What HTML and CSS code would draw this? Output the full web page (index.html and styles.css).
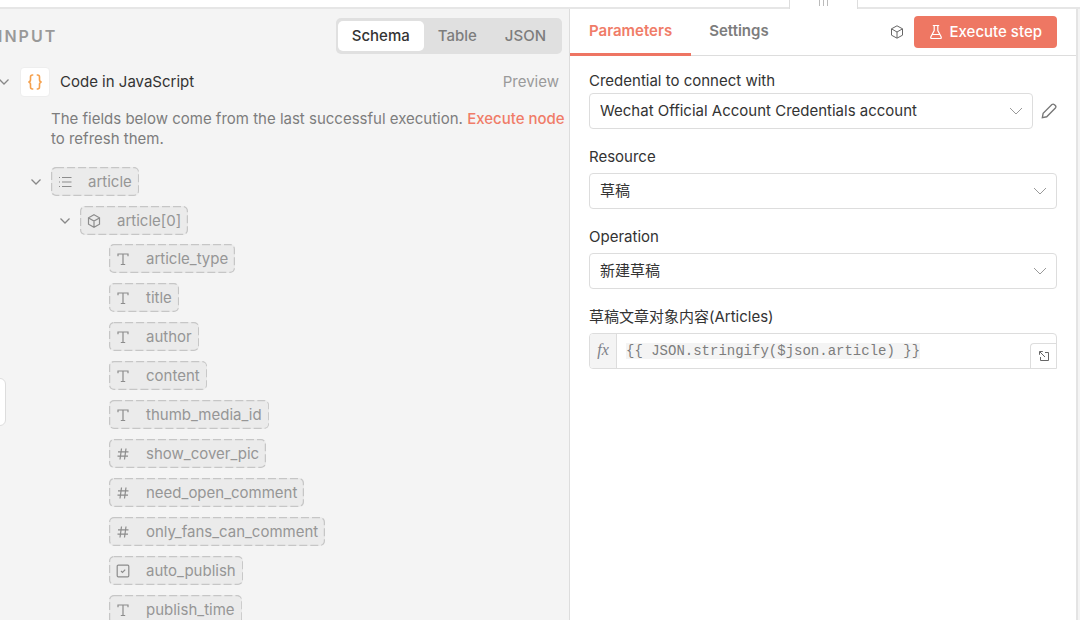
FILE: index.html
```html
<!DOCTYPE html>
<html lang="en">
<head>
<meta charset="utf-8">
<title>Node details</title>
<link rel="stylesheet" href="styles.css">
</head>
<body>
<svg class="sprite" aria-hidden="true">
  <symbol id="chevron" viewBox="0 0 12 12"><path d="M1.500 3.500 6 8l4.500-4.500"/></symbol>
  <symbol id="wide-chevron" viewBox="0 0 14 14"><path d="M1 4l6 6 6-6"/></symbol>
  <symbol id="list" viewBox="0 0 14 14"><path d="M4 2.500h9.500M4 7h9.500M4 11.500h9.500M1 2.500h1M1 7h1M1 11.500h1"/></symbol>
  <symbol id="cube" viewBox="0 0 14 14"><path d="M7 .8 12.500 3.800v6.400L7 13.200 1.500 10.200V3.800ZM1.600 3.900 7 7l5.400-3.100M7 7v6"/></symbol>
  <symbol id="text" viewBox="0 0 14 14"><path d="M2 4.200V2h10v2.200M7 2v10.500M4.800 12.500h4.400"/></symbol>
  <symbol id="hash" viewBox="0 0 14 14"><path d="M5.500 1.500 4 12.500M10 1.500 8.500 12.500M2 4.800h10.500M1.500 9.200H12"/></symbol>
  <symbol id="check" viewBox="0 0 14 14"><rect x="1.200" y="1.200" width="11.600" height="11.600" rx="1"/><path d="M5 7l1.500 1.500 2.700-2.900"/></symbol>
</svg>
<div class="top-strip"><span class="drag-handle"><i></i><i></i><i></i></span></div>
<main class="workspace">
  <section class="input-panel" aria-label="Input">
    <header class="input-header">
      <h2 class="input-title">INPUT</h2>
      <div class="view-switch">
        <button class="view active" type="button">Schema</button>
        <button class="view" type="button">Table</button>
        <button class="view" type="button">JSON</button>
      </div>
    </header>
    <div class="node-row">
      <svg class="icon chevron"><use href="#chevron"/></svg>
      <span class="node-badge"><svg viewBox="0 0 16 16"><path d="M6.300 1H5.500Q3.500 1 3.500 3v2.500Q3.500 8 1.300 8q2.200 0 2.200 2.500V13q0 2 2 2h.8M9.700 1h.8q2 0 2 2v2.500Q12.500 8 14.700 8q-2.200 0-2.200 2.500V13q0 2-2 2h-.8"/></svg></span>
      <span class="node-name">Code in JavaScript</span>
      <span class="preview">Preview</span>
    </div>
    <p class="notice">The fields below come from the last successful execution. <a href="#">Execute node</a><br>to refresh them.</p>
    <ul class="tree">
      <li>
        <div class="branch"><svg class="icon chevron"><use href="#chevron"/></svg><span class="pill"><svg class="icon"><use href="#list"/></svg>article</span></div>
        <ul class="tree nested">
          <li>
            <div class="branch"><svg class="icon chevron"><use href="#chevron"/></svg><span class="pill"><svg class="icon"><use href="#cube"/></svg>article[0]</span></div>
            <ul class="tree leaves">
              <li><span class="pill"><svg class="icon"><use href="#text"/></svg>article_type</span></li>
              <li><span class="pill"><svg class="icon"><use href="#text"/></svg>title</span></li>
              <li><span class="pill"><svg class="icon"><use href="#text"/></svg>author</span></li>
              <li><span class="pill"><svg class="icon"><use href="#text"/></svg>content</span></li>
              <li><span class="pill"><svg class="icon"><use href="#text"/></svg>thumb_media_id</span></li>
              <li><span class="pill"><svg class="icon"><use href="#hash"/></svg>show_cover_pic</span></li>
              <li><span class="pill"><svg class="icon"><use href="#hash"/></svg>need_open_comment</span></li>
              <li><span class="pill"><svg class="icon"><use href="#hash"/></svg>only_fans_can_comment</span></li>
              <li><span class="pill"><svg class="icon"><use href="#check"/></svg>auto_publish</span></li>
              <li><span class="pill"><svg class="icon"><use href="#text"/></svg>publish_time</span></li>
            </ul>
          </li>
        </ul>
      </li>
    </ul>
    <span class="side-handle"></span>
  </section>
  <section class="params-panel" aria-label="Parameters">
    <header class="params-header">
      <button class="tab active" type="button">Parameters</button>
      <button class="tab" type="button">Settings</button>
      <svg class="icon header-cube"><use href="#cube"/></svg>
      <button class="execute" type="button"><svg viewBox="0 0 14 16"><path d="M3.800 1.500h6.400M5.200 1.500v5L1.900 12.800q-.7 1.700 1 1.700h8.200q1.700 0 1-1.700L8.800 6.500v-5M3.400 10.500h7.200"/></svg>Execute step</button>
    </header>
    <form class="fields">
      <div class="field">
        <label for="credential">Credential to connect with</label>
        <div class="credential-row">
          <div class="select-box"><select id="credential"><option>Wechat Official Account Credentials account</option></select><svg class="icon"><use href="#wide-chevron"/></svg></div>
          <button class="edit" type="button" aria-label="Edit credential"><svg viewBox="0 0 18 18"><path d="M1.500 16.500l.9-4.900L12.300 1.800q1.400-1.200 2.800.1l1 1q1.300 1.400.1 2.800L6.400 15.500Z"/></svg></button>
        </div>
      </div>
      <div class="field">
        <label for="resource">Resource</label>
        <div class="select-box"><select id="resource"><option>草稿</option></select><svg class="icon"><use href="#wide-chevron"/></svg></div>
      </div>
      <div class="field">
        <label for="operation">Operation</label>
        <div class="select-box"><select id="operation"><option>新建草稿</option></select><svg class="icon"><use href="#wide-chevron"/></svg></div>
      </div>
      <div class="field">
        <label for="articles">草稿文章对象内容(Articles)</label>
        <div class="expression">
          <span class="fx">fx</span>
          <div class="code"><input id="articles" type="text" value="{{ JSON.stringify($json.article) }}"></div>
          <button class="expand" type="button" aria-label="Open editor"><svg viewBox="0 0 12 12"><path d="M1.500 4.800V1.500h3.300M1.800 1.800 7 7M7 2.500h3.500v8h-8V7"/></svg></button>
        </div>
      </div>
    </form>
  </section>
</main>
</body>
</html>
```
FILE: styles.css
```css
* { box-sizing: border-box; }
body {
  margin: 0;
  height: 100vh;
  display: flex;
  flex-direction: column;
  overflow: hidden;
  background: #fff;
  color: #333;
  font: 15px/20px Inter, "Noto Sans CJK SC", sans-serif;
}
button, select, input { font: inherit; color: inherit; margin: 0; }
button { border: 0; background: none; padding: 0; }
svg { fill: none; stroke: currentColor; flex: none; }
.sprite { display: none; }
.icon { width: 14px; height: 14px; }
.chevron { width: 12px; height: 12px; stroke-width: 1.300; color: #888; }

.top-strip { position: relative; flex: none; height: 9px; border-bottom: 2px solid #e6e6e6; }
.drag-handle {
  position: absolute;
  z-index: 1;
  top: 0;
  left: 789px;
  width: 69px;
  height: 9px;
  display: flex;
  justify-content: center;
  gap: 2px;
  background: #fff;
  border: solid #ddd;
  border-width: 0 1px;
}
.drag-handle i { width: 2px; height: 6px; border-left: 1px solid #bbb; }

.workspace { flex: 1; min-height: 0; display: grid; grid-template-columns: 569fr 511fr; }
.input-panel { position: relative; background: #f4f4f4; padding: 9px 7px 0 0; }
.input-header { display: flex; align-items: center; justify-content: space-between; }
.input-title { margin: 0 0 0 -2px; font-size: 16px; font-weight: 600; letter-spacing: 2px; color: #999; }
.view-switch { display: flex; padding: 3px 2px; border-radius: 5px; background: #e0e0e0; }
.view { height: 30px; padding: 0 14px; border-radius: 5px; font-weight: 500; color: #7d7d7d; }
.view.active { background: #fff; color: #333; }

.node-row { display: flex; align-items: center; margin: 13px 3px 0 -2px; }
.node-badge { display: grid; place-items: center; width: 30px; height: 30px; margin: 0 10px; border: 1px solid #eee; border-radius: 4px; background: #fff; color: #f5a04c; }
.node-badge svg { width: 16px; height: 16px; stroke-width: 1.600; }
.node-name { flex: 1; }
.preview { color: #9a9a9a; }
.notice { margin: 12px -7px 0 51px; color: #7d7d7d; }
.notice a { color: #f07c68; font-weight: 500; text-decoration: none; white-space: nowrap; }

.tree { display: flex; flex-direction: column; gap: 10px; margin: 0; padding: 0; list-style: none; }
.notice + .tree { margin: 18px 0 0 30px; }
.tree .nested { margin-top: 10px; padding-left: 29px; }
.tree .leaves { margin-top: 9px; padding-left: 50px; }
.branch { display: flex; align-items: center; gap: 9px; }
.pill {
  display: flex;
  align-items: center;
  gap: 16px;
  width: max-content;
  height: 29px;
  padding: 0 7px;
  border-radius: 5px;
  color: #969696;
  background: #ebebeb url("data:image/svg+xml,%3Csvg xmlns='http://www.w3.org/2000/svg' width='100%25' height='100%25'%3E%3Crect x='0' y='0' width='100%25' height='100%25' rx='5' fill='none' stroke='%23c6c6c6' stroke-width='2.500' stroke-dasharray='8 3'/%3E%3C/svg%3E");
}
.pill .icon { stroke-width: 1.200; color: #8c8c8c; }
.side-handle { position: absolute; left: -6px; top: 369px; width: 12px; height: 48px; border: 1px solid #ddd; border-radius: 6px; background: #fff; }

.params-panel { border-left: 1px solid #ddd; border-right: 2px solid #e4e4e4; margin-right: 2px; box-shadow: 2px 0 #f4f4f4; }
.params-header { display: flex; align-items: center; height: 47px; padding-right: 19px; border-bottom: 1px solid #ddd; }
.tab { height: 47px; padding: 0 19px; border-bottom: 3px solid transparent; font-weight: 600; color: #7d7d7d; }
.tab + .tab { padding-left: 18px; }
.tab.active { color: #f07c68; border-color: #ee7563; }
.header-cube { margin-left: auto; color: #666; }
.execute { display: flex; align-items: center; gap: 7px; height: 32px; margin-left: 10px; padding: 0 15px; border-radius: 4px; background: #ee7763; color: #fff; font-weight: 500; }
.execute svg { width: 14px; height: 16px; stroke-width: 1.200; }

.fields { display: flex; flex-direction: column; gap: 18px; padding: 15px 19px 0; }
.field { display: flex; flex-direction: column; gap: 2px; }
.field + .field { gap: 6px; }
.credential-row { display: flex; align-items: center; gap: 8px; }
.select-box { position: relative; flex: 1; }
select { appearance: none; display: block; width: 100%; height: 36px; padding: 0 36px 0 10px; border: 1px solid #ddd; border-radius: 4px; background: #fff; }
.select-box .icon { position: absolute; right: 10px; top: 11px; color: #999; pointer-events: none; }
.edit svg { display: block; width: 16px; height: 16px; stroke-width: 1.500; color: #777; }
.expression { display: flex; height: 36px; border: 1px solid #ddd; border-radius: 4px 4px 0 4px; overflow: hidden; }
.fx { width: 27px; border-right: 1px solid #ddd; background: #f4f4f4; color: #7d8088; font: italic 16px/32px "Liberation Serif", serif; text-align: center; }
.code { flex: 1; padding: 9px; }
.code input { display: block; width: 35ch; height: 16px; padding: 0; border: 0; background: #f4f4f4; color: #7d7d7d; font: 14px/16px "Liberation Mono", monospace; }
.expand { align-self: flex-end; display: grid; place-items: center; width: 26px; height: 25px; border: solid #ddd; border-width: 1px 0 0 1px; border-radius: 4px 0 0; color: #666; }
.expand svg { width: 12px; height: 12px; }
```
